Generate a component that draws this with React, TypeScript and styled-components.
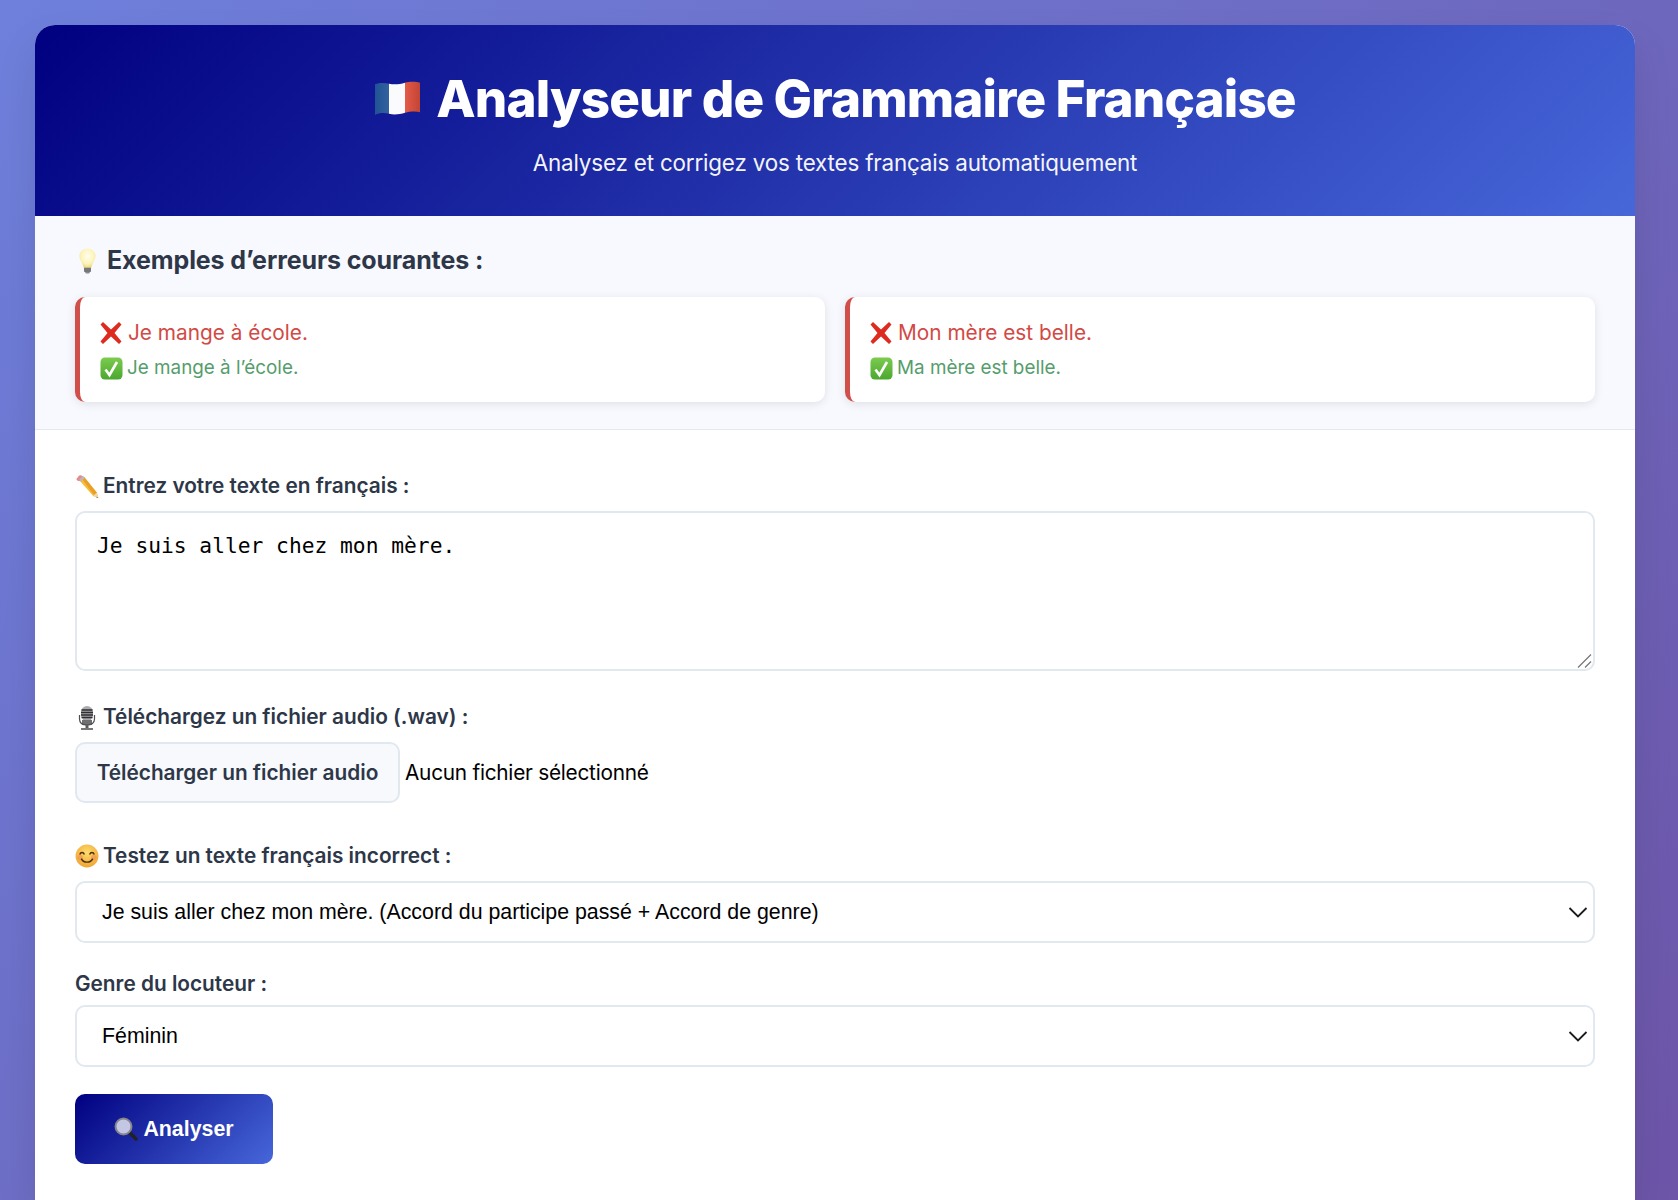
import React from "react";
import styled, { createGlobalStyle, css } from "styled-components";

const Global = createGlobalStyle`
  html, body { margin: 0; padding: 0; }
  body {
    min-height: 1200px;
    background: linear-gradient(135deg, #6e80dc 0%, #6d55a8 100%);
    font-family: Inter, "Liberation Sans", sans-serif;
    overflow: hidden;
  }
`;

const Page = styled.div`
  padding: 25px 43px 0 35px;
`;
const Container = styled.main`
  width: 1600px;
  min-height: 1175px;
  background: #fff;
  border-radius: 20px 20px 0 0;
  overflow: hidden;
  box-shadow: 0 20px 40px rgba(0, 0, 0, 0.1);
`;
const Header = styled.header`
  height: 191px;
  box-sizing: border-box;
  padding-top: 40px;
  background: linear-gradient(135deg, #000080 0%, #4767d9 100%);
  color: #fff;
  text-align: center;
`;
const Title = styled.h1`
  margin: 0 0 17px;
  font-size: 51.2px;
  line-height: 66px;
  font-weight: 800;
  letter-spacing: -0.87px;
  display: flex;
  justify-content: center;
  align-items: center;
  gap: 15px;
`;
const Subtitle = styled.p`
  margin: 0;
  font-size: 22.4px;
  line-height: 30px;
  letter-spacing: -0.17px;
  opacity: 0.95;
`;
const Examples = styled.section`
  padding: 28px 40px 27px;
  background: #f8f9ff;
  border-bottom: 1px solid #e2e8f0;
`;
const ExamplesTitle = styled.h3`
  margin: 0 0 20px;
  display: flex;
  align-items: center;
  gap: 11px;
  padding-left: 4px;
  color: #2d3748;
  font-size: 25px;
  line-height: 33px;
  font-weight: 700;
  letter-spacing: -0.1px;
`;
const ExampleGrid = styled.div`
  display: grid;
  grid-template-columns: 1fr 1fr;
  gap: 20px;
`;
const ExampleCard = styled.article`
  height: 105px;
  box-sizing: border-box;
  padding: 22px 20px 0;
  background: #fff;
  border-left: 5px solid #d04f4a;
  border-radius: 10px;
  box-shadow: 0 2px 10px rgba(0, 0, 0, 0.1);
`;
const ExampleLine = styled.div<{ $ok?: boolean }>`
  display: flex;
  align-items: center;
  gap: 4px;
  ${(p) =>
    p.$ok
      ? css`
          margin-top: 7px;
          color: #559d6c;
          font-size: 18.85px;
          line-height: 28px;
        `
      : css`
          color: #d24a45;
          font-size: 20.8px;
          line-height: 28px;
        `}
`;
const Form = styled.section`
  padding: 43px 40px 36px;
  background: #fff;
`;
const Group = styled.div<{ $gap?: number }>`
  margin-bottom: ${(p) => p.$gap ?? 28}px;
`;
const Label = styled.label<{ $plain?: boolean }>`
  display: flex;
  align-items: center;
  gap: 4px;
  margin-bottom: ${(p) => (p.$plain ? 8 : 12)}px;
  color: #2d3748;
  font-size: 20.8px;
  line-height: 26px;
  font-weight: 600;
`;
const TextAreaWrap = styled.div`
  position: relative;
`;
const TextArea = styled.textarea`
  display: block;
  width: 100%;
  height: 160px;
  box-sizing: border-box;
  padding: 20px;
  background: #fff;
  border: 2px solid #e2e8f0;
  border-radius: 10px;
  outline: none;
  color: #000;
  font-family: "DejaVu Sans Mono", monospace;
  font-size: 21.25px;
  line-height: 26px;
  resize: none;
`;
const Grip = styled.svg`
  position: absolute;
  right: 3px;
  bottom: 3px;
  width: 15px;
  height: 15px;
  pointer-events: none;
`;
const FileRow = styled.div`
  display: flex;
  align-items: center;
  gap: 5px;
`;
const FileButton = styled.button`
  width: 325px;
  height: 61px;
  padding: 0;
  background: #f7f9fc;
  border: 2px solid #e2e8f0;
  border-radius: 10px;
  color: #2d3748;
  font-family: inherit;
  font-size: 20.8px;
  font-weight: 600;
`;
const FileName = styled.span`
  color: #000;
  font-size: 20.8px;
  letter-spacing: -0.25px;
`;
const SelectWrap = styled.div`
  position: relative;
`;
const Select = styled.select`
  display: block;
  width: 100%;
  height: 62px;
  box-sizing: border-box;
  padding: 0 40px 0 25px;
  appearance: none;
  background: #fff;
  border: 2px solid #e2e8f0;
  border-radius: 10px;
  outline: none;
  color: #000;
  font-family: "Liberation Sans", Arial, sans-serif;
  font-size: 21.33px;
`;
const Chevron = styled.svg`
  position: absolute;
  right: 7px;
  top: 50%;
  width: 20px;
  height: 13px;
  transform: translateY(-50%);
  pointer-events: none;
`;
const AnalyzeButton = styled.button`
  display: flex;
  align-items: center;
  justify-content: center;
  gap: 5px;
  width: 198px;
  height: 70px;
  padding: 0;
  background: linear-gradient(135deg, #000080 0%, #4767d9 100%);
  border: none;
  border-radius: 10px;
  color: #fff;
  font-family: "Liberation Sans", Arial, sans-serif;
  font-size: 21.33px;
  font-weight: 700;
`;
const Glyph = styled.svg<{ $w: number; $h: number }>`
  flex: none;
  width: ${(p) => p.$w}px;
  height: ${(p) => p.$h}px;
`;

const Flag = () => (
  <Glyph $w={47} $h={35} viewBox="0 0 47 32" preserveAspectRatio="none">
    <defs>
      <linearGradient id="fb" x1="0" x2="1">
        <stop offset="0" stopColor="#1f5394" />
        <stop offset="1" stopColor="#34629f" />
      </linearGradient>
      <linearGradient id="fr" x1="0" x2="1">
        <stop offset="0" stopColor="#e45a48" />
        <stop offset="1" stopColor="#c24534" />
      </linearGradient>
    </defs>
    <path d="M1 3C5 1.500 11 1.500 15 2.500L15 30C11 29 5 29 1 31Z" fill="url(#fb)" />
    <path d="M15 2.500C20 3.500 26 3 31 1.500L31 29C26 30.500 20 31 15 30Z" fill="#fbfbfd" />
    <path d="M31 1.500C35 0.500 42 0.500 46 1.500L46 28.500C42 27.500 35 28 31 29Z" fill="url(#fr)" />
  </Glyph>
);
const Bulb = () => (
  <Glyph $w={17} $h={26} viewBox="0 0 17 26">
    <defs>
      <radialGradient id="bg" cx=".5" cy=".4" r=".6">
        <stop offset="0" stopColor="#fffef0" />
        <stop offset=".7" stopColor="#fdf3b8" />
        <stop offset="1" stopColor="#efd978" />
      </radialGradient>
    </defs>
    <path d="M8.500 .5C4 .5 .5 4 .5 8c0 4 3 6 4 11.500h8c1-5.500 4-7.500 4-11.500 0-4-3.500-7.500-8-7.500Z" fill="url(#bg)" />
    <path d="M5 19.500h7v3.500l-2 2.500H7L5 23Z" fill="#8b8b8b" />
    <path d="M5 21h7M5 23h7" stroke="#5a5a5a" strokeWidth=".8" />
  </Glyph>
);
const Cross = () => (
  <Glyph $w={24} $h={24} viewBox="1 0 24 24">
    <path d="M1.500 3.500 4 1l8 7.500L20 1l2.500 2.500L15.500 12l7 8.500L20 23l-8-7.500L4 23l-2.500-2.500L8.500 12Z" fill="#de2b20" />
  </Glyph>
);
const Check = () => (
  <Glyph $w={23} $h={23} viewBox="0 0 23 23">
    <defs>
      <linearGradient id="cg" x1="0" x2="0" y1="0" y2="1">
        <stop offset="0" stopColor="#7ccb4f" />
        <stop offset="1" stopColor="#4aa82e" />
      </linearGradient>
    </defs>
    <rect x="0.5" y="0.5" width="22" height="22" rx="4.500" fill="url(#cg)" />
    <path d="M5.500 12.500l4 5.500 7.500-13" fill="none" stroke="#fff" strokeWidth="2.600" />
  </Glyph>
);
const Pencil = () => (
  <Glyph $w={24} $h={24} viewBox="0 0 23 23">
    <path d="M5 7 9 3 21 18l1.500 5-5-2Z" fill="#f5bd3a" />
    <path d="M7 5 9 3 21 18l-3 2Z" fill="#e8a028" />
    <path d="M1.500 4.500 4 1.500Q5.500 .5 7 2L9 3 5 7 2.500 6.500Q1 5.500 1.500 4.500Z" fill="#e58b8f" />
    <path d="M4 5.500 7.500 2 9.500 3.500 5.500 7.500Z" fill="#b9b9bd" />
    <path d="M17.500 21 21 18l1.500 5Z" fill="#f1d9ae" />
    <path d="M20.800 21.700l1.700 1.300-2.200-.8Z" fill="#333" />
  </Glyph>
);
const Mic = () => (
  <Glyph $w={24} $h={25} viewBox="-2 0 24 25">
    <rect x="4" y="1" width="12" height="15" rx="6" fill="#a9abaf" />
    <path d="M4.500 5h11M4 7.500h12M4 10h12M4.500 12.500h11" stroke="#2e2e30" strokeWidth="1.300" />
    <rect x="5" y="15" width="10" height="5" fill="#6f6f72" />
    <path d="M2.500 10v4c0 4 3 6 7.500 6s7.500-2 7.500-6v-4" fill="none" stroke="#4e4e52" strokeWidth="1.200" />
    <path d="M10 20v3" stroke="#5a5a5e" strokeWidth="3" />
    <path d="M4 24h12" stroke="#77777a" strokeWidth="2" />
  </Glyph>
);
const Smile = () => (
  <Glyph $w={24} $h={24} viewBox="0 0 23 23">
    <defs>
      <radialGradient id="sg" cx=".5" cy=".35" r=".7">
        <stop offset="0" stopColor="#fddc6c" />
        <stop offset="1" stopColor="#f0a02f" />
      </radialGradient>
    </defs>
    <circle cx="11.500" cy="11.500" r="11" fill="url(#sg)" />
    <circle cx="5" cy="13" r="2.600" fill="#ee8a55" opacity=".55" />
    <circle cx="18" cy="13" r="2.600" fill="#ee8a55" opacity=".55" />
    <path d="M4.500 10c1-2.500 3.500-2.500 4.500 0M14 10c1-2.500 3.500-2.500 4.500 0" fill="none" stroke="#4a2f10" strokeWidth="1.300" />
    <path d="M6 14c2 4.500 9 4.500 11 0" fill="none" stroke="#4a2f10" strokeWidth="1.300" />
  </Glyph>
);
const Lens = () => (
  <Glyph $w={24} $h={24} viewBox="0 0 24 24">
    <path d="M14.500 14.500 22 22" stroke="#222" strokeWidth="3.400" strokeLinecap="round" />
    <circle cx="9.500" cy="9.500" r="8" fill="#c3c7e4" stroke="#85858c" strokeWidth="2" />
  </Glyph>
);
const ChevronDown = () => (
  <Chevron viewBox="0 0 20 13">
    <path d="M1.500 2.500 10 11l8.500-8.500" fill="none" stroke="#1c1c1c" strokeWidth="1.800" />
  </Chevron>
);
const ResizeGrip = () => (
  <Grip viewBox="0 0 15 15">
    <path d="M1 14.500 14 1.500M8 14.500 14 8.500" fill="none" stroke="#777" strokeWidth="1.200" />
  </Grip>
);

export default function App() {
  return (
    <Page>
      <Global />
      <Container>
        <Header>
          <Title>
            <Flag />
            Analyseur de Grammaire Française
          </Title>
          <Subtitle>Analysez et corrigez vos textes français automatiquement</Subtitle>
        </Header>
        <Examples>
          <ExamplesTitle>
            <Bulb />
            Exemples d’erreurs courantes :
          </ExamplesTitle>
          <ExampleGrid>
            <ExampleCard>
              <ExampleLine>
                <Cross />
                Je mange à école.
              </ExampleLine>
              <ExampleLine $ok>
                <Check />
                Je mange à l’école.
              </ExampleLine>
            </ExampleCard>
            <ExampleCard>
              <ExampleLine>
                <Cross />
                Mon mère est belle.
              </ExampleLine>
              <ExampleLine $ok>
                <Check />
                Ma mère est belle.
              </ExampleLine>
            </ExampleCard>
          </ExampleGrid>
        </Examples>
        <Form>
          <Group $gap={33}>
            <Label>
              <Pencil />
              Entrez votre texte en français :
            </Label>
            <TextAreaWrap>
              <TextArea defaultValue="Je suis aller chez mon mère." />
              <ResizeGrip />
            </TextAreaWrap>
          </Group>
          <Group $gap={40}>
            <Label>
              <Mic />
              Téléchargez un fichier audio (.wav) :
            </Label>
            <FileRow>
              <FileButton type="button">Télécharger un fichier audio</FileButton>
              <FileName>Aucun fichier sélectionné</FileName>
            </FileRow>
          </Group>
          <Group>
            <Label>
              <Smile />
              Testez un texte français incorrect :
            </Label>
            <SelectWrap>
              <Select defaultValue="a">
                <option value="a">Je suis aller chez mon mère. (Accord du participe passé + Accord de genre)</option>
              </Select>
              <ChevronDown />
            </SelectWrap>
          </Group>
          <Group $gap={27}>
            <Label $plain>Genre du locuteur :</Label>
            <SelectWrap>
              <Select defaultValue="f">
                <option value="f">Féminin</option>
                <option value="m">Masculin</option>
              </Select>
              <ChevronDown />
            </SelectWrap>
          </Group>
          <AnalyzeButton type="button">
            <Lens />
            Analyser
          </AnalyzeButton>
        </Form>
      </Container>
    </Page>
  );
}
